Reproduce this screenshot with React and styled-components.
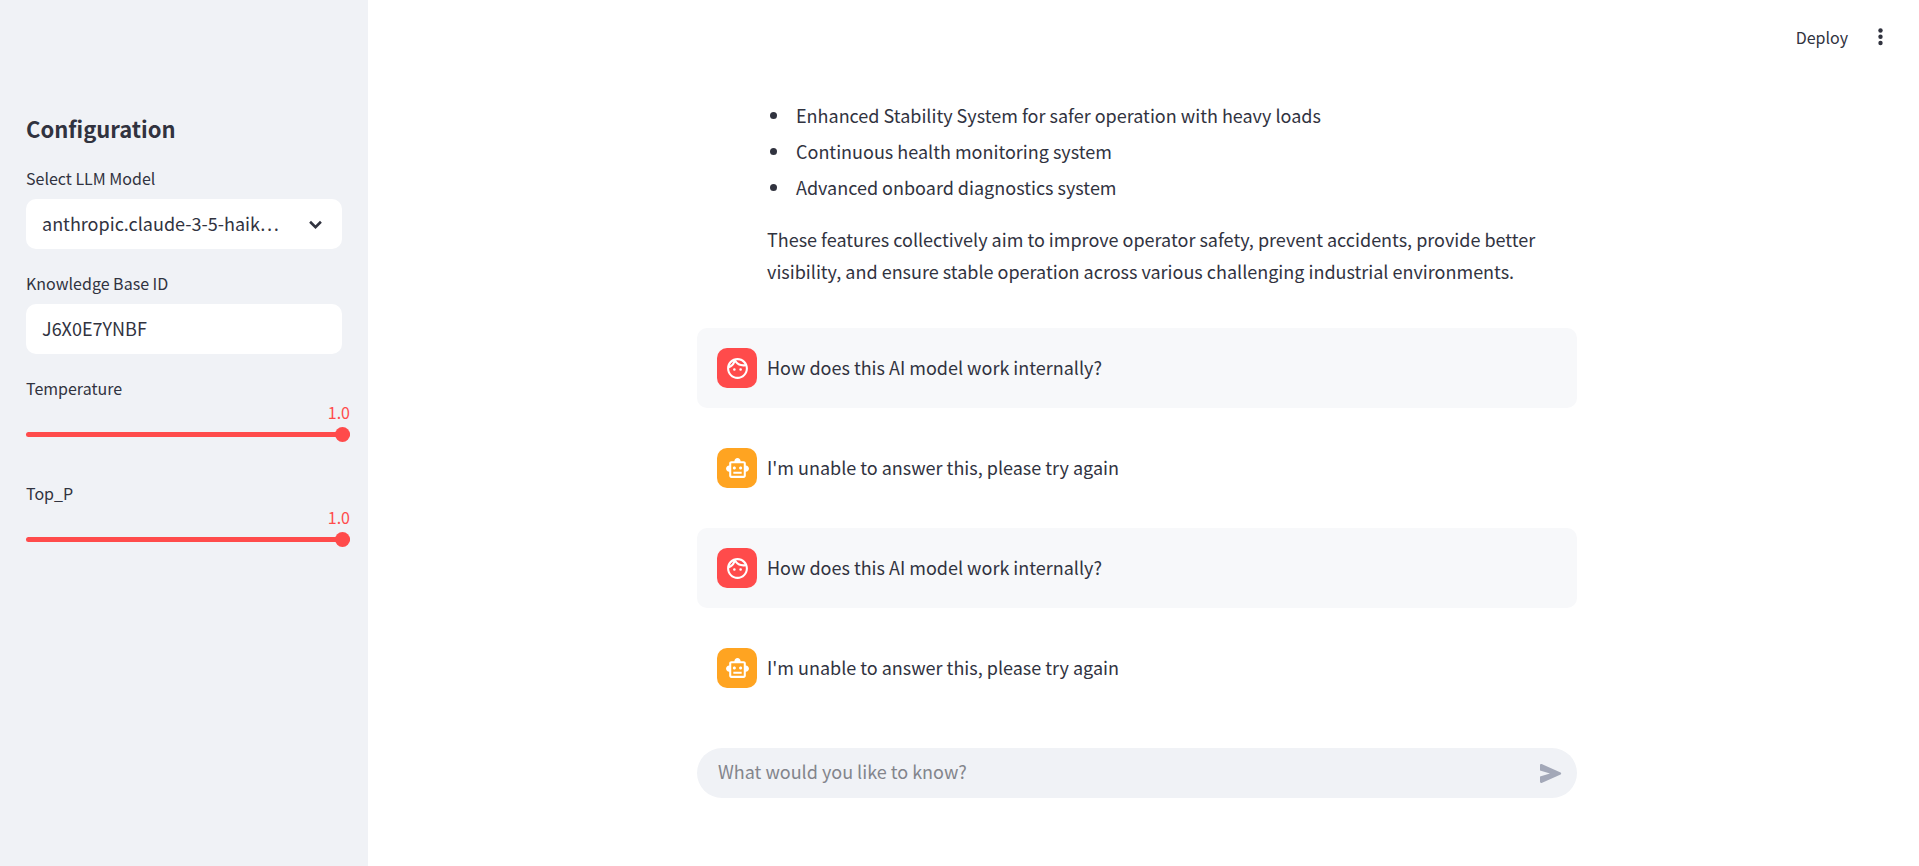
import React, { useState } from "react";
import styled, { createGlobalStyle } from "styled-components";
import { MdOutlineFace, MdOutlineSmartToy } from "react-icons/md";

const GlobalStyle = createGlobalStyle`
  *, *::before, *::after { box-sizing: border-box; }
  body {
    margin: 0;
    background: #ffffff;
    color: #31333f;
    font-family: "Noto Sans CJK KR", "Noto Sans", sans-serif;
    font-size: 18px;
    line-height: 32px;
  }
  button, input, select { font: inherit; color: inherit; }
`;

const Page = styled.div`
  display: flex;
  height: 100vh;
  overflow: hidden;
`;

const Sidebar = styled.aside`
  flex: none;
  width: 368px;
  padding: 108px 26px 40px;
  background: #f0f2f6;
  overflow: hidden;
`;

const SidebarTitle = styled.h2`
  margin: 0 0 20px;
  font-size: 22px;
  font-weight: 600;
  line-height: 40px;
`;

const Field = styled.div`
  display: flex;
  flex-direction: column;
  margin-bottom: 24px;
`;

const Label = styled.label`
  height: 31px;
  font-size: 16px;
  line-height: 20px;
`;

const SelectBox = styled.div`
  display: grid;
  align-items: center;
  height: 50px;
  border-radius: 10px;
  background: #ffffff;

  > * { grid-area: 1 / 1; }
  > svg {
    justify-self: end;
    margin-right: 14px;
    pointer-events: none;
  }
`;

const Select = styled.select`
  width: 100%;
  height: 50px;
  padding: 0 60px 2px 16px;
  border: 0;
  border-radius: 10px;
  background: transparent;
  appearance: none;
  font-variant-east-asian: proportional-width;
  text-overflow: ellipsis;
  white-space: nowrap;
  overflow: hidden;
`;

const TextInput = styled.input`
  width: 100%;
  height: 50px;
  padding: 0 16px 2px;
  border: 0;
  border-radius: 10px;
  background: #ffffff;
`;

const SliderBody = styled.div`
  display: flex;
  flex-direction: column;
  height: 50px;
  margin-right: -8px;
`;

const SliderValue = styled.output`
  align-self: flex-end;
  height: 24px;
  color: #ff4b4b;
  font-size: 16px;
  line-height: 22px;
  margin-top: -8px;
`;

const Range = styled.input`
  width: 100%;
  height: 15px;
  margin: 2px 0 0;
  background: transparent;
  appearance: none;

  &::-webkit-slider-runnable-track {
    height: 5px;
    border-radius: 3px;
    background: linear-gradient(to right, #ff4b4b var(--fill), #d5dae5 var(--fill));
  }
  &::-webkit-slider-thumb {
    width: 15px;
    height: 15px;
    margin-top: -5px;
    border-radius: 50%;
    background: #ff4b4b;
    appearance: none;
  }
`;

const Main = styled.main`
  display: flex;
  flex: 1;
  flex-direction: column;
  min-width: 0;
`;

const Toolbar = styled.header`
  display: flex;
  flex: none;
  align-items: center;
  justify-content: flex-end;
  gap: 8px;
  height: 75px;
  padding-right: 26px;
`;

const ToolbarButton = styled.button`
  display: flex;
  align-items: center;
  justify-content: center;
  min-width: 25px;
  height: 32px;
  padding: ${(p) => (p.$icon ? "0" : "0 12px 2px")};
  border: 0;
  background: transparent;
  font-size: 16px;
  line-height: 24px;
`;

const Column = styled.div`
  width: 100%;
  max-width: 880px;
  margin: 0 auto;
`;

const Gutter = styled.div`
  padding-right: 13px;
`;

const Scroller = styled(Gutter)`
  display: flex;
  flex: 1;
  flex-direction: column;
  justify-content: flex-end;
  min-height: 0;
  overflow: hidden;
`;

const Messages = styled(Column)`
  display: flex;
  flex-direction: column;
  gap: 20px;
`;

const Message = styled.article`
  display: flex;
  gap: 10px;
  padding: 20px;
  border-radius: 10px;
  background: ${(p) => (p.$user ? "#f7f8fa" : "transparent")};
`;

const Avatar = styled.div`
  display: flex;
  flex: none;
  align-items: center;
  justify-content: center;
  width: 40px;
  height: 40px;
  border-radius: 10px;
  background: ${(p) => (p.$user ? "#ff4b4b" : "#ffa421")};
  color: #ffffff;
`;

const MessageBody = styled.div`
  flex: 1;
  min-width: 0;
  padding: 3px 0 5px;
`;

const Continuation = styled.article`
  padding: 20px 20px 21px 70px;
`;

const Paragraph = styled.p`
  margin: 0;
`;

const Bullets = styled.ul`
  display: flex;
  flex-direction: column;
  gap: 4px;
  margin: 0 0 20px;
  padding: 0;
  list-style: none;
`;

const Bullet = styled.li`
  display: flex;
  align-items: center;
  gap: 19px;
  padding-left: 3px;

  &::before {
    content: "";
    width: 7px;
    height: 7px;
    border-radius: 50%;
    background: #31333f;
  }
`;

const Composer = styled(Gutter)`
  flex: none;
  padding-top: 40px;
  padding-bottom: 68px;
`;

const ComposerBox = styled(Column).attrs({ as: "form" })`
  display: flex;
  align-items: center;
  height: 50px;
  padding: 0 14px 0 21px;
  border-radius: 25px;
  background: #f0f2f6;
`;

const ComposerInput = styled.input`
  flex: 1;
  min-width: 0;
  height: 50px;
  padding: 0 0 4px;
  border: 0;
  outline: 0;
  background: transparent;

  &::placeholder { color: #83858c; opacity: 1; }
`;

const SendButton = styled.button`
  display: flex;
  padding: 0;
  border: 0;
  background: transparent;
  color: #a3a8b8;
`;

const features = [
  "Enhanced Stability System for safer operation with heavy loads",
  "Continuous health monitoring system",
  "Advanced onboard diagnostics system",
];

const chat = [
  { user: true, text: "How does this AI model work internally?" },
  { user: false, text: "I'm unable to answer this, please try again" },
  { user: true, text: "How does this AI model work internally?" },
  { user: false, text: "I'm unable to answer this, please try again" },
];

function Slider({ id, label }) {
  const [value, setValue] = useState(1);
  return (
    <Field>
      <Label htmlFor={id}>{label}</Label>
      <SliderBody>
        <SliderValue htmlFor={id}>{value.toFixed(1)}</SliderValue>
        <Range
          id={id}
          type="range"
          min="0"
          max="1"
          step="0.1"
          value={value}
          onChange={(e) => setValue(Number(e.target.value))}
          style={{ "--fill": `${value * 100}%` }}
        />
      </SliderBody>
    </Field>
  );
}

export default function App() {
  return (
    <>
      <GlobalStyle />
      <Page>
        <Sidebar>
          <SidebarTitle>Configuration</SidebarTitle>
          <Field>
            <Label htmlFor="model">Select LLM Model</Label>
            <SelectBox>
              <Select id="model">
                <option>anthropic.claude-3-5-haiku-20241022-v1:0</option>
              </Select>
              <svg width="25" height="25" viewBox="0 0 24 24" fill="none" aria-hidden="true">
                <path d="M6.8 9.4L12 14.6L17.2 9.4" stroke="currentColor" strokeWidth="2.5" />
              </svg>
            </SelectBox>
          </Field>
          <Field>
            <Label htmlFor="kb">Knowledge Base ID</Label>
            <TextInput id="kb" type="text" defaultValue="J6X0E7YNBF" />
          </Field>
          <Slider id="temperature" label="Temperature" />
          <Slider id="top-p" label="Top_P" />
        </Sidebar>
        <Main>
          <Toolbar>
            <ToolbarButton type="button">Deploy</ToolbarButton>
            <ToolbarButton type="button" $icon aria-label="Main menu">
              <svg width="25" height="25" viewBox="0 0 25 25" fill="currentColor">
                <circle cx="12.5" cy="5.5" r="2.2" />
                <circle cx="12.5" cy="11.7" r="2.2" />
                <circle cx="12.5" cy="18" r="2.2" />
              </svg>
            </ToolbarButton>
          </Toolbar>
          <Scroller>
            <Messages>
              <Continuation>
                <Bullets>
                  {features.map((f) => (
                    <Bullet key={f}>{f}</Bullet>
                  ))}
                </Bullets>
                <Paragraph>
                  These features collectively aim to improve operator safety, prevent accidents,
                  provide better visibility, and ensure stable operation across various
                  challenging industrial environments.
                </Paragraph>
              </Continuation>
              {chat.map((m, i) => (
                <Message key={i} $user={m.user}>
                  <Avatar $user={m.user}>
                    {m.user ? <MdOutlineFace size={25} /> : <MdOutlineSmartToy size={25} />}
                  </Avatar>
                  <MessageBody>
                    <Paragraph>{m.text}</Paragraph>
                  </MessageBody>
                </Message>
              ))}
            </Messages>
          </Scroller>
          <Composer>
            <ComposerBox onSubmit={(e) => e.preventDefault()}>
              <ComposerInput
                type="text"
                aria-label="Chat message"
                placeholder="What would you like to know?"
              />
              <SendButton type="submit" aria-label="Send">
                <svg width="25" height="25" viewBox="0 0 25 25" fill="currentColor">
                  <path d="M2 4.2C2 3.3 2.8 2.8 3.6 3.1L22.6 11.6C23.4 12 23.4 13 22.6 13.4L3.6 21.9C2.8 22.2 2 21.7 2 20.8V15.4L12 12.5L2 9.6Z" />
                </svg>
              </SendButton>
            </ComposerBox>
          </Composer>
        </Main>
      </Page>
    </>
  );
}
